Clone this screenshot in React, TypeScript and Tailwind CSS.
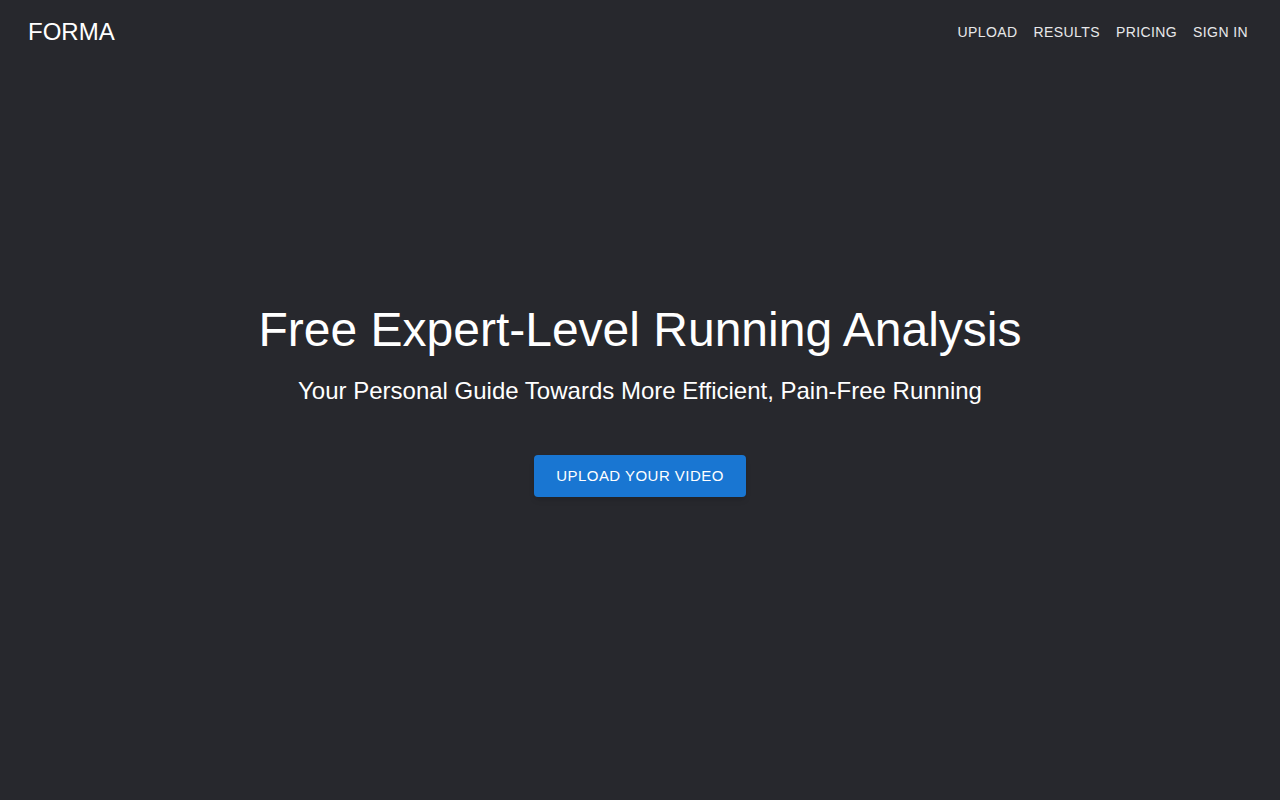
const navItems = ["Upload", "Results", "Pricing", "Sign In"];

export default function App() {
  return (
    <div className="flex min-h-screen flex-col bg-[#27282d] font-['Liberation_Sans',Arial,sans-serif] text-white">
      <header className="flex h-16 items-center justify-between px-6">
        <a href="#" className="px-1 text-[24px] leading-none tracking-normal text-white">
          FORMA
        </a>
        <nav className="flex items-center">
          {navItems.map((item) => (
            <button
              key={item}
              className="rounded px-2 py-1.5 text-[14px] uppercase leading-[1.75] tracking-[0.4px] text-[#e8e8ea] hover:bg-white/5"
            >
              {item}
            </button>
          ))}
        </nav>
      </header>

      <main className="flex flex-1 flex-col items-center justify-center pb-[66px] text-center">
        <h1 className="text-[48px] leading-[1.2] font-normal">Free Expert-Level Running Analysis</h1>
        <p className="mt-4 text-[24px] leading-[1.33]">
          Your Personal Guide Towards More Efficient, Pain-Free Running
        </p>
        <button className="mt-12 h-[42px] rounded bg-[#1976d2] px-[22px] text-[15px] uppercase leading-[26px] tracking-[0.46px] text-white shadow-md hover:bg-[#1565c0]">
          Upload Your Video
        </button>
      </main>
    </div>
  );
}
